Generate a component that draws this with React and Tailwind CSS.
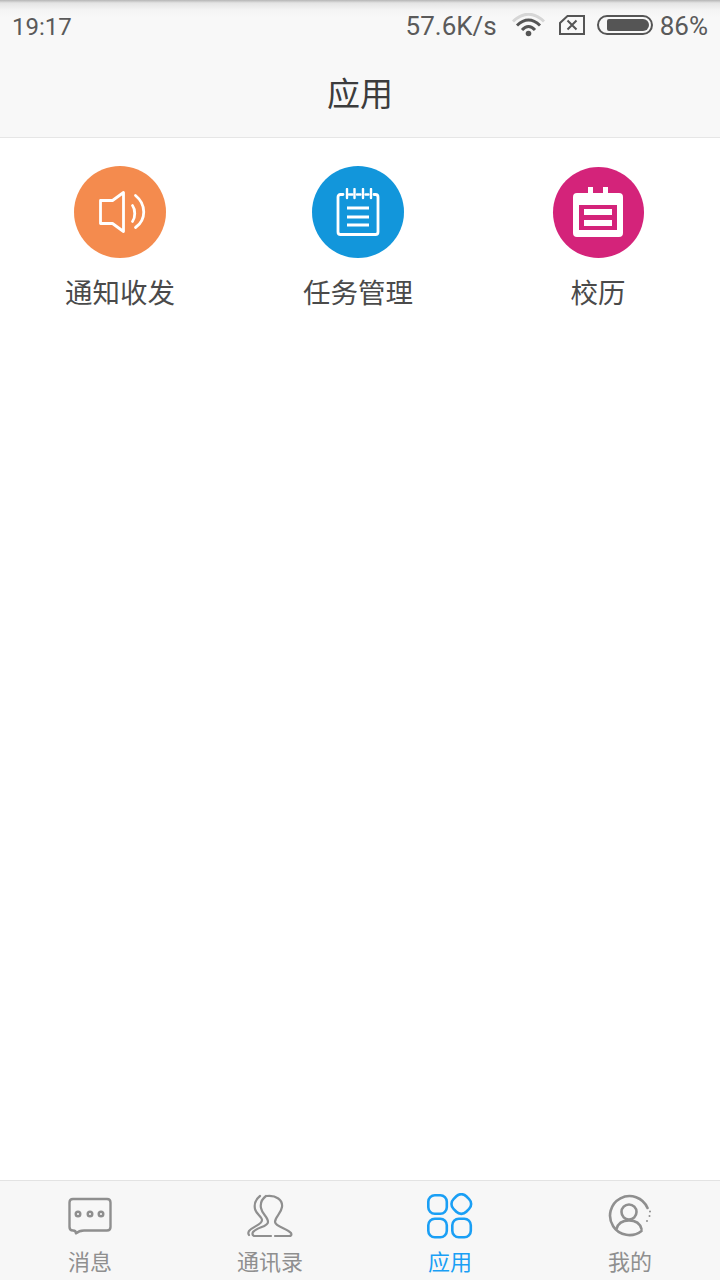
const cjk = { fontFamily: '"Noto Sans CJK SC", Roboto, sans-serif' }

function Wifi() {
  return (
    <svg width="33" height="24" viewBox="0 0 33 24" fill="none">
      <path d="M1 8.500Q16.500 -6 32 8.500" stroke="#d6d6d6" strokeWidth="3" />
      <path d="M5 12.500Q16.500 1.500 28 12.500" stroke="#555" strokeWidth="3" />
      <path d="M10 17Q16.500 10 23 17" stroke="#555" strokeWidth="3" />
      <circle cx="16.500" cy="20.500" r="2.800" fill="#555" />
    </svg>
  )
}

function SimOff() {
  return (
    <svg width="26" height="20" viewBox="0 0 26 20" fill="none" stroke="#555">
      <path d="M8.500 1H25V19H1V8Z" strokeWidth="2" />
      <path d="M8.500 5.500L17.500 14.500M17.500 5.500L8.500 14.500" strokeWidth="2" />
    </svg>
  )
}

function Battery() {
  return (
    <div className="w-[56px] h-[20px] rounded-full border-2 border-[#555] py-[2px] pl-[8px] pr-[2px]">
      <div className="w-full h-full rounded-r-[6px] rounded-l-[2px] bg-[#555]" />
    </div>
  )
}

function Speaker() {
  return (
    <svg width="48" height="43" viewBox="-1.500 -1.500 48 43" fill="none" stroke="#fff" strokeWidth="2.800" strokeLinecap="round" strokeLinejoin="round" className="ml-[5px]">
      <path d="M0 8H12L23 0V39L12 31H0Z" />
      <path d="M32 13C35 17 35 25 32 29" />
      <path d="M35 3C46 12 46 27 35 35" />
    </svg>
  )
}

function Notepad() {
  return (
    <svg width="44" height="48" viewBox="-1 -1 44 48" fill="none" stroke="#fff" strokeLinecap="round">
      <path d="M6 5.500H3.500Q1 5.500 1 8V43Q1 45.500 3.500 45.500H38.500Q41 45.500 41 43V8Q41 5.500 38.500 5.500H37" strokeWidth="2.800" />
      <path d="M12 5.500H15.500M20 5.500H23.500M28.500 5.500H31.500" strokeWidth="2.400" />
      <path d="M10 0V9M17.500 0V9M26 0V9M34 0V9" strokeWidth="2.400" />
      <path d="M10 19H32M10 28H32M10 36H32" strokeWidth="2.800" strokeLinecap="butt" />
    </svg>
  )
}

function CalendarIcon() {
  return (
    <svg width="50" height="50" viewBox="0 0 50 50">
      <path fillRule="evenodd" fill="#fff" d="M15 0H20V6H30V0H35V6H46Q50 6 50 10V46Q50 50 46 50H4Q0 50 0 46V10Q0 6 4 6H15ZM6 18V43H44V18ZM11 22H39V28H11ZM11 33H39V39H11Z" />
    </svg>
  )
}

function ChatIcon() {
  return (
    <svg width="44" height="38" viewBox="0 0 44 38" fill="none" stroke="#8f8f8f" strokeWidth="2.400" strokeLinejoin="round">
      <path d="M5 2H39Q42.500 2 42.500 5.500V30Q42.500 33.500 39 33.500H16Q11 33.500 8 36.500Q8 33.500 5 33.500Q1.500 33.500 1.500 30V5.500Q1.500 2 5 2Z" />
      <circle cx="10" cy="17" r="2.300" />
      <circle cx="22" cy="17" r="2.300" />
      <circle cx="33" cy="17" r="2.300" />
    </svg>
  )
}

function ContactsIcon() {
  return (
    <svg width="48" height="44" viewBox="0 0 48 44" fill="none" stroke="#8f8f8f" strokeWidth="2.200" strokeLinecap="round" className="mr-[2px]">
      <path d="M22 2C31 1 38 6 37 13C36 20 30 23 30 28C31 33 41 34 46 39C47 41 46 42 44 42H30" />
      <path d="M21 2C17 5 15 9 16 14C17 20 23 23 23 28C23 33 12 33 8 38C7 40 7 41 9 42H26" />
      <path d="M15 2C11 5 9 10 10 15C11 20 17 23 17 26C17 31 8 32 4 37C3 39 3 40 4 41" />
    </svg>
  )
}

function AppsIcon() {
  return (
    <svg width="46" height="46" viewBox="0 0 46 46" fill="none" stroke="#1a9ff5" strokeWidth="2.600">
      <rect x="1.300" y="2.300" width="18.500" height="18.500" rx="6.500" />
      <rect x="25.300" y="2" width="18" height="18" rx="7" transform="rotate(45 34.300 11)" />
      <rect x="1.300" y="25.700" width="18.500" height="18.500" rx="6.500" />
      <rect x="25.300" y="25.700" width="18.500" height="18.500" rx="6.500" />
    </svg>
  )
}

function MeIcon() {
  return (
    <svg width="44" height="44" viewBox="0 0 44 44" fill="none" stroke="#8f8f8f" strokeWidth="2.600" strokeLinecap="round">
      <path d="M39.500 14A19.500 19.500 0 1 0 33.500 37" />
      <circle cx="21" cy="18" r="7.500" />
      <path d="M8.500 35C10 29 15 26.500 21 26.500C27 26.500 32 29 33.500 35" />
      <path d="M42 17.500V17.600M41.500 22V22.100M39 27V27.100" strokeWidth="2" />
    </svg>
  )
}

const apps = [
  { name: '通知收发', bg: 'w-[92px] h-[92px] bg-[#f48b4e]', icon: <Speaker /> },
  { name: '任务管理', bg: 'w-[92px] h-[92px] bg-[#1296db]', icon: <Notepad /> },
  { name: '校历', bg: 'w-[91px] h-[91px] my-[0.5px] bg-[#d4237a]', icon: <CalendarIcon /> },
]

const tabs = [
  { name: '消息', icon: <ChatIcon /> },
  { name: '通讯录', icon: <ContactsIcon /> },
  { name: '应用', icon: <AppsIcon />, active: true },
  { name: '我的', icon: <MeIcon /> },
]

export default function App() {
  return (
    <div className="h-[1280px] w-[720px] flex flex-col bg-white overflow-hidden" style={cjk}>
      <header className="h-[138px] shrink-0 border-b border-[#e6e6e6] bg-[linear-gradient(#b5b5b5_0,#e4e4e4_3px,#f4f4f4_10px,#f8f8f8_18px)]">
        <div className="h-[50px] pt-[3px] px-3 flex items-center justify-between text-[#5a5a5a]" style={{ fontFamily: 'Roboto, sans-serif' }}>
          <span className="text-[24px]">19:17</span>
          <div className="flex items-center text-[26px]">
            <span>57.6K/s</span>
            <span className="ml-[15px] mb-[3px]"><Wifi /></span>
            <span className="ml-[14px] mb-[3px]"><SimOff /></span>
            <span className="ml-[12px] mb-[3px]"><Battery /></span>
            <span className="ml-[7px]">86%</span>
          </div>
        </div>
        <h1 className="mt-[20px] text-center text-[33px] leading-[44px] font-normal text-[#3c3c3c]">应用</h1>
      </header>

      <main className="flex-1 grid grid-cols-[240px_236px_244px] content-start pt-[28px]">
        {apps.map(app => (
          <div key={app.name} className="flex flex-col items-center">
            <div className={`rounded-full flex items-center justify-center ${app.bg}`}>
              {app.icon}
            </div>
            <span className="mt-[13px] text-[27.5px] leading-[40px] text-[#4a4a4a]">{app.name}</span>
          </div>
        ))}
      </main>

      <nav className="h-[100px] shrink-0 grid grid-cols-4 bg-[#f7f7f7] border-t border-[#e3e3e3]">
        {tabs.map(tab => (
          <div key={tab.name} className="flex flex-col items-center">
            <div className="h-[60px] flex items-center justify-center pt-[10px]">{tab.icon}</div>
            <span className={`mt-[4px] text-[22px] leading-[30px] ${tab.active ? 'text-[#1a9ff5]' : 'text-[#8f8f8f]'}`}>{tab.name}</span>
          </div>
        ))}
      </nav>
    </div>
  )
}
